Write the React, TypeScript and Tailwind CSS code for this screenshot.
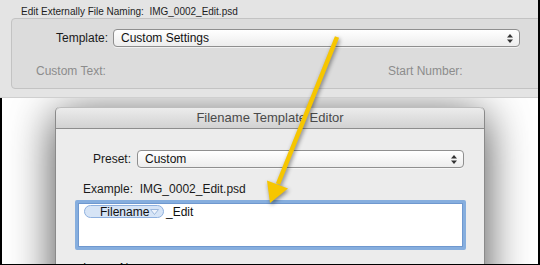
import React from "react";

function Stepper() {
  return (
    <span className="flex flex-col items-center leading-none text-[#333]">
      <svg width="6" height="9" viewBox="0 0 6 9">
        <path d="M3 0 L6 3.5 H0 Z" fill="#333" />
        <path d="M3 9 L6 5.5 H0 Z" fill="#333" />
      </svg>
    </span>
  );
}

function Select({ value, width }: { value: string; width: string }) {
  return (
    <div
      className={`${width} h-[18px] rounded-[4px] border border-[#8f8f8f] bg-gradient-to-b from-white to-[#ededed] flex items-center justify-between pl-[7px] pr-[6px] shadow-[0_1px_0_rgba(255,255,255,0.6)]`}
    >
      <span className="text-[12px] leading-none text-[#111]">{value}</span>
      <Stepper />
    </div>
  );
}

function Arrow() {
  return (
    <svg
      className="absolute left-0 top-0 z-20 pointer-events-none"
      width="540"
      height="265"
      viewBox="0 0 540 265"
      style={{ filter: "drop-shadow(1px 2px 2px rgba(0,0,0,0.45))" }}
    >
      <line x1="337" y1="37" x2="278" y2="184" stroke="#f6c600" strokeWidth="4.5" strokeLinecap="butt" />
      <path d="M270 203 L288 188.5 L267 180.5 Z" fill="#f6c600" />
    </svg>
  );
}

export default function App() {
  return (
    <div className="relative w-[540px] h-[265px] overflow-hidden bg-white font-['Liberation_Sans',sans-serif] border-r-2 border-black flex flex-col">
      {/* Outer panel */}
      <div className="relative z-10 h-[98px] shrink-0 bg-[#e4e4e4] border-b border-[#cfcfcf] pt-[6px]">
        <div className="pl-[21px] text-[10px] leading-[12px] text-[#1e1e1e]">
          Edit Externally File Naming:&nbsp; IMG_0002_Edit.psd
        </div>
        <div className="ml-[11px] w-[540px] h-[71px] border border-[#c3c3c3] rounded-[4px] bg-[#dcdcdc] pt-[10px]">
          <div className="flex items-center gap-[5px]">
            <div className="w-[96px] text-right text-[12px] text-[#1a1a1a]">Template:</div>
            <Select value="Custom Settings" width="w-[407px]" />
          </div>
          <div className="flex mt-[15px] text-[12px] text-[#8c8c8c]">
            <div className="pl-[24px] w-[376px]">Custom Text:</div>
            <div>Start Number:</div>
          </div>
        </div>
      </div>

      {/* Lower area with dialog */}
      <div className="flex-1 border-l-2 border-b border-black pl-[53px] pt-[9px] overflow-hidden">
        <div className="w-[430px] h-[200px] bg-[#ececec] border-l border-r border-[#8a8a8a] rounded-t-[5px] shadow-[0_8px_46px_rgba(0,0,0,0.72)]">
          <div className="h-[22px] rounded-t-[5px] bg-gradient-to-b from-[#ececec] to-[#d2d2d2] border-b border-[#8d8d8d] border-t border-t-[#bdbdbd] flex items-center justify-center text-[13px] text-[#4a4a4a]">
            Filename Template Editor
          </div>
          <div className="pt-[21px]">
            <div className="flex items-center gap-[6px]">
              <div className="w-[75px] text-right text-[12px] text-[#1a1a1a]">Preset:</div>
              <Select value="Custom" width="w-[327px]" />
            </div>
            <div className="pl-[27px] mt-[14px] text-[12px] leading-[14px] text-[#1a1a1a]">
              Example:&nbsp; IMG_0002_Edit.psd
            </div>
            <div className="ml-[19px] mt-[4px] w-[391px] h-[50px] bg-white border-[3px] border-[#86aede] rounded-[2px] shadow-[inset_0_0_0_1px_#6f98cf] pl-[6px] pt-[2px]">
              <div className="flex items-center">
                <div className="h-[13px] w-[80px] rounded-full border border-[#8eb0df] bg-[#d6e4f6] flex items-center pl-[15px] pr-[4px] justify-between">
                  <span className="text-[12px] leading-none text-[#111]">Filename</span>
                  <svg width="9" height="6" viewBox="0 0 9 6">
                    <path d="M0.5 0.5 H8.5 L4.5 5.5 Z" fill="#eef3fb" stroke="#9db8dc" strokeWidth="1" />
                  </svg>
                </div>
                <span className="ml-[2px] text-[12px] leading-none text-[#111]">_Edit</span>
              </div>
            </div>
            <div className="pl-[27px] mt-[9px] text-[12px] text-[#1a1a1a]">Image Name</div>
          </div>
        </div>
      </div>

      <Arrow />
    </div>
  );
}
